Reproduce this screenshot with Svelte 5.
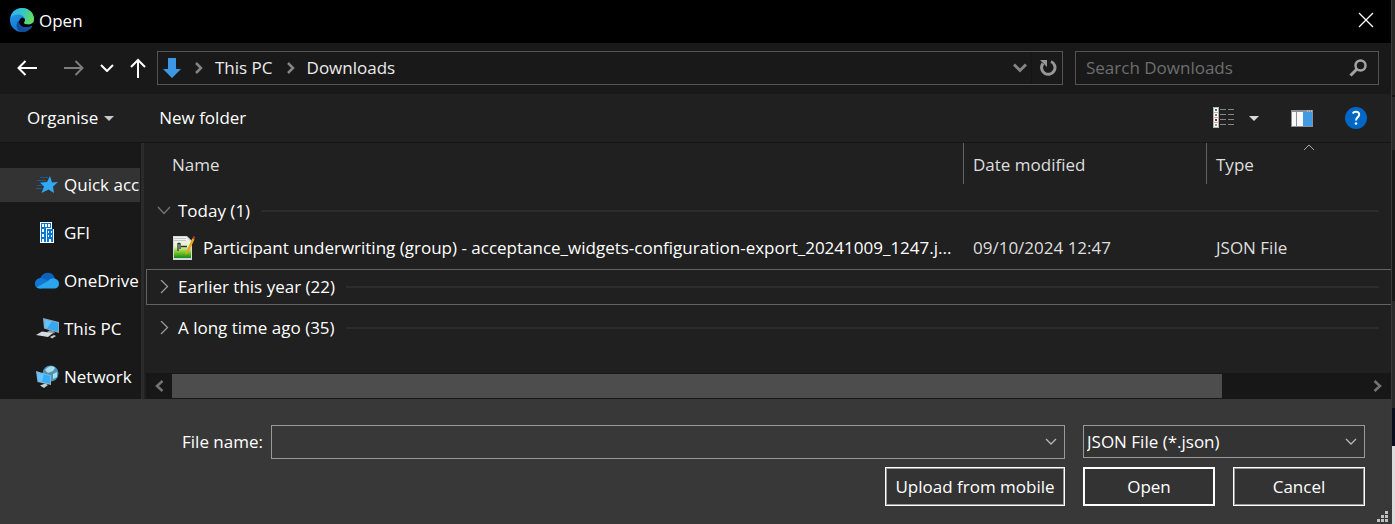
<script>
  const places = [
    { name: 'Quick access', icon: 'star', active: true },
    { name: 'GFI', icon: 'building' },
    { name: 'OneDrive', icon: 'cloud' },
    { name: 'This PC', icon: 'pc' },
    { name: 'Network', icon: 'network' }
  ];
  let search = $state('');
  let fileName = $state('');
</script>

<div class="screen">
  <div class="dialog" role="dialog" aria-labelledby="dialog-title">
    <header class="titlebar">
      <svg class="edge" width="24" height="24" viewBox="0 0 24 24" aria-hidden="true">
        <defs>
          <linearGradient id="edge-top" x1="0" y1="0.3" x2="1" y2="0.6">
            <stop offset="0" stop-color="#2fb4f0" />
            <stop offset="0.5" stop-color="#36c8c4" />
            <stop offset="1" stop-color="#6be04a" />
          </linearGradient>
          <linearGradient id="edge-left" x1="0" y1="0" x2="0.6" y2="1">
            <stop offset="0" stop-color="#2aa0ea" />
            <stop offset="1" stop-color="#0a70d2" />
          </linearGradient>
        </defs>
        <circle cx="12" cy="12" r="12" fill="url(#edge-left)" />
        <path d="M9 15C9 21 16 22 22 18.5C19.500 22.500 15.500 24.300 11.500 24C6.500 22.500 5 17 8.500 12.500Z" fill="#114a9a" />
        <path d="M0.500 9.500C2 3.500 6.500 0 12 0C19 0 24 5 24 10.800C24 14.500 21 16.500 18 16.500C15.500 16.500 13.800 15.600 13.800 14.800C13.800 14.200 15 13.800 15 12C15 8.500 11.500 6.500 8 6.500C4.500 6.500 1.800 8 0.500 9.500Z" fill="url(#edge-top)" />
        <path d="M9 15C8.700 12.500 10 10.500 12 9.500C14 9.800 15 11 15 12.300C15 13.800 13.800 14.200 13.800 14.800C13.800 15.600 15.500 16.500 18 16.500C20 16.500 21.800 15.900 24 14L24 19L22 18C16 21 10 19 9 15Z" fill="#000" />
        <path d="M9 15C9.500 18.700 14.500 20.800 22 17.800C22.500 18.200 21.800 19 21.200 19.600C16 25 8.500 21.500 9 15Z" fill="#12509f" />
      </svg>
      <h1 id="dialog-title">Open</h1>
      <button class="close" aria-label="Close">
        <svg width="16" height="16" viewBox="0 0 16 16"><path d="M1 1L15 15M15 1L1 15" stroke="#fff" stroke-width="1.300" /></svg>
      </button>
    </header>

    <nav class="navbar" aria-label="Location">
      <button class="back" aria-label="Back">
        <svg width="20" height="16" viewBox="0 0 20 16"><path d="M20 8H1.500M8.500 1L1.500 8L8.500 15" fill="none" stroke="#fff" stroke-width="2" /></svg>
      </button>
      <button class="forward" aria-label="Forward">
        <svg width="20" height="16" viewBox="0 0 20 16"><path d="M0 8H18.500M11.500 1L18.500 8L11.500 15" fill="none" stroke="#7d7d7d" stroke-width="2" /></svg>
      </button>
      <button class="recent" aria-label="Recent locations">
        <svg width="14" height="8" viewBox="0 0 14 8"><path d="M1 1L7 7L13 1" fill="none" stroke="#fff" stroke-width="2" /></svg>
      </button>
      <button class="up" aria-label="Up one level">
        <svg width="16" height="20" viewBox="0 0 16 20"><path d="M8 20V2M1 9L8 2L15 9" fill="none" stroke="#fff" stroke-width="2" /></svg>
      </button>
      <div class="address">
        <svg width="18" height="20" viewBox="0 0 18 20" aria-hidden="true"><path d="M5 0H13V11H18L9 20L0 11H5Z" fill="#3c97e6" /></svg>
        <svg class="sep" width="8" height="12" viewBox="0 0 8 12" aria-hidden="true"><path d="M1 1L6 6L1 11" fill="none" stroke="#858585" stroke-width="2.500" /></svg>
        <a href="#this-pc">This PC</a>
        <svg class="sep" width="8" height="12" viewBox="0 0 8 12" aria-hidden="true"><path d="M1 1L6 6L1 11" fill="none" stroke="#858585" stroke-width="2.500" /></svg>
        <a href="#downloads">Downloads</a>
        <button class="history" aria-label="Previous locations">
          <svg width="14" height="10" viewBox="0 0 14 10"><path d="M1 1.500L7 7.500L13 1.500" fill="none" stroke="#858585" stroke-width="3" /></svg>
        </button>
        <button class="refresh" aria-label="Refresh">
          <svg width="18" height="18" viewBox="0 0 18 18"><path d="M12 2.500A6.700 6.700 0 1 1 4 4.500" fill="none" stroke="#969696" stroke-width="3" /><path d="M1 1H8V8Z" fill="#969696" /></svg>
        </button>
      </div>
      <label class="search">
        <input type="text" placeholder="Search Downloads" aria-label="Search Downloads" bind:value={search} />
        <svg width="18" height="18" viewBox="0 0 18 18" aria-hidden="true"><circle cx="11.500" cy="6.500" r="5" fill="none" stroke="#a3a3a3" stroke-width="2.500" /><path d="M8 10L1.500 16.500" stroke="#a3a3a3" stroke-width="3" /></svg>
      </label>
    </nav>

    <div class="toolbar">
      <button class="organise">Organise
        <svg width="10" height="5" viewBox="0 0 10 5" aria-hidden="true"><path d="M0 0H10L5 5Z" fill="#c8c8c8" /></svg>
      </button>
      <button>New folder</button>
      <div class="tools">
        <button aria-label="Change view">
          <svg width="22" height="22" viewBox="0 0 22 22">
            <path d="M0 0H6V21H0Z" fill="#b4b4b4" />
            <path d="M1 1H5V5H1ZM1 6H5V10H1ZM1 11H5V15H1ZM1 16H5V20H1Z" fill="#fff" />
            <rect x="2" y="2" width="2" height="2" fill="#2d76a8" />
            <rect x="2" y="7" width="2" height="2" fill="#a8634c" />
            <rect x="2" y="12" width="2" height="2" fill="#c81818" />
            <rect x="2" y="17" width="2" height="2" fill="#7ea850" />
            <path d="M7 2.500H13M15 2.500H21M7 7.500H13M15 7.500H21M7 12.500H13M15 12.500H21M7 17.500H13M15 17.500H21" stroke="#858585" />
          </svg>
        </button>
        <button class="view-more" aria-label="More view options">
          <svg width="10" height="5" viewBox="0 0 10 5"><path d="M0 0H10L5 5Z" fill="#d8d8d8" /></svg>
        </button>
        <button class="preview" aria-label="Show the preview pane">
          <svg width="22" height="17" viewBox="0 0 22 17">
            <rect width="22" height="17" fill="#8c9096" />
            <path d="M1 2H5V16H1ZM6 2H12V16H6Z" fill="#f8f8f8" />
            <rect x="12" y="2" width="9" height="14" fill="#419be4" />
            <path d="M16 1H17M18 1H19M20 1H21" stroke="#ddd" />
          </svg>
        </button>
        <button class="help" aria-label="Help">
          <svg width="22" height="22" viewBox="0 0 22 22">
            <circle cx="11" cy="11" r="11" fill="#0067c5" />
            <path d="M7.800 6.500C9 3.800 14.200 4 14.200 7.500C14.200 10.200 11 10.500 11 13.500" fill="none" stroke="#fff" stroke-width="2" />
            <circle cx="11" cy="16.500" r="1.300" fill="#fff" />
          </svg>
        </button>
      </div>
    </div>

    <div class="body">
      <ul class="places">
        {#each places as place}
          <li>
            <a href="#{place.icon}" class:active={place.active}>
              <svg width="24" height="24" viewBox="0 0 24 24" aria-hidden="true">
                {#if place.icon === 'star'}
                  <path d="M15 3L17 9.500L23 9L18 13.500L19 20L13.500 16.500L6.500 20L9 13.500L5 9.500L12 9Z" fill="#30a8f4" />
                  <path d="M5 4.500H13M2 7.500H11M2 12.500H8M1 15.500H7" stroke="#1c5a8c" />
                {:else if place.icon === 'building'}
                  <path d="M5 1H17V8H19V22H5Z" fill="#fff" />
                  <path d="M6 2H16V7H11V21H6ZM12 8H18V21H12Z" fill="#0078d7" />
                  <path d="M7 3H9V6H7ZM10 3H12V6H10ZM13 3H15V6H13ZM7 8H9V11H7ZM7 13H9V16H7ZM13 10H14V12H13ZM16 10H17V12H16ZM13 14H14V16H13ZM16 14H17V16H16ZM14 18H16V22H14ZM7 18H9V22H7Z" fill="#fff" />
                {:else if place.icon === 'cloud'}
                  <path d="M5 9.500C7 4 13 2.500 17 5C18.500 6 19.500 7.500 19.700 9.500L14 14Z" fill="#0b63bb" />
                  <path d="M5 19.500C1.500 19.500 0 17.500 0 14.500C0 11 3 8.800 6.500 9C10 9 13 12 16 14L6 19.500Z" fill="#1177d2" />
                  <path d="M13 12C15 9.500 18 8.500 20.500 9.700C23 10.700 24 12.500 24 15C24 17.800 22 19.500 19.500 19.500H5C3.500 19.500 2.500 19 1.800 18.300Z" fill="#2aa6ed" />
                {:else if place.icon === 'pc'}
                  <path d="M8 1L24 5V16L9 11.500Z" fill="#8fa9bb" />
                  <path d="M9.500 2.500L23 6V14.500L10.300 11Z" fill="#35a7f5" />
                  <path d="M9.500 2.500L17 4.500L12 11.500L10.300 11Z" fill="#65c1fc" />
                  <path d="M15 13L19 14.500L20 16L15 17L12 15Z" fill="#8799a5" />
                  <path d="M1 18L7 14.500L18 16L13 20Z" fill="#d3dbe1" />
                  <path d="M15 20L19 18L21 19L17 21.500Z" fill="#c2cbd2" />
                {:else}
                  <circle cx="15.500" cy="8.500" r="8" fill="#4a94b8" />
                  <path d="M10 5C13 1 18 0 20 3L18 6L13 8ZM18 9L22 7L22 12L18 14Z" fill="#a9dcec" />
                  <path d="M1 6L16 10.500V20L2.500 17Z" fill="#91b4c8" />
                  <path d="M2 7.500L15 11.300V18.500L3.300 16Z" fill="#32adf8" />
                  <path d="M2 7.500L9 9.500L7 16.800L3.300 16Z" fill="#65c3ff" />
                  <path d="M5 20.500L10 18.500L13 20L9 23Z" fill="#c6d0d7" />
                {/if}
              </svg>
              <span>{place.name}</span>
            </a>
          </li>
        {/each}
      </ul>

      <div class="listing">
        <table>
          <colgroup><col /><col class="c-date" /><col class="c-type" /></colgroup>
          <thead>
            <tr>
              <th scope="col" class="name">Name</th>
              <th scope="col">Date modified</th>
              <th scope="col" aria-sort="ascending">Type
                <svg class="sort" width="12" height="7" viewBox="0 0 12 7" aria-hidden="true"><path d="M1 6L6 1L11 6" fill="none" stroke="#a8a8a8" /></svg>
              </th>
            </tr>
          </thead>
          <tbody>
            <tr class="group first">
              <td colspan="3">
                <button aria-expanded="true">
                  <svg width="14" height="14" viewBox="0 0 14 14" aria-hidden="true"><path d="M1 3L7 9.500L13 3" fill="none" stroke="#757575" stroke-width="1.300" /></svg>
                  <span>Today (1)</span>
                </button>
              </td>
            </tr>
            <tr class="file">
              <td>
                <div class="file-name">
                  <svg width="22" height="24" viewBox="0 0 22 24" aria-hidden="true">
                    <defs>
                      <linearGradient id="sheet" x1="0" y1="0" x2="0" y2="1">
                        <stop offset="0" stop-color="#f4f4f4" />
                        <stop offset="0.450" stop-color="#e6f3c4" />
                        <stop offset="0.700" stop-color="#87ce30" />
                        <stop offset="1" stop-color="#108a18" />
                      </linearGradient>
                    </defs>
                    <path d="M0 0H14L19 5V24H0Z" fill="#d5d8dc" />
                    <path d="M1 1H13L18 6V22H1Z" fill="url(#sheet)" />
                    <path d="M1 2.500H13M1 4.500H13" stroke="#bfc7d2" />
                    <path d="M5 7V15M7 7V13M5 7.500H7M8 10.500H14" fill="none" stroke="#333" stroke-width="1.300" />
                    <path d="M19.500 2L21.500 3.500L15 17L12.500 19L13 16Z" fill="#e9a51b" />
                    <path d="M19.500 2L20.500 0L22 1L21.500 3.500Z" fill="#b23b3b" />
                  </svg>
                  <span>Participant underwriting (group) - acceptance_widgets-configuration-export_20241009_1247.j...</span>
                </div>
              </td>
              <td>09/10/2024 12:47</td>
              <td>JSON File</td>
            </tr>
            <tr class="group focused">
              <td colspan="3">
                <button aria-expanded="false">
                  <svg width="14" height="14" viewBox="0 0 14 14" aria-hidden="true"><path d="M4 0L10.500 6.500L4 13" fill="none" stroke="#9a9a9a" stroke-width="1.300" /></svg>
                  <span>Earlier this year (22)</span>
                </button>
              </td>
            </tr>
            <tr class="group">
              <td colspan="3">
                <button aria-expanded="false">
                  <svg width="14" height="14" viewBox="0 0 14 14" aria-hidden="true"><path d="M4 0L10.500 6.500L4 13" fill="none" stroke="#9a9a9a" stroke-width="1.300" /></svg>
                  <span>A long time ago (35)</span>
                </button>
              </td>
            </tr>
          </tbody>
        </table>
        <div class="scrollbar">
          <button aria-label="Scroll left">
            <svg width="10" height="12" viewBox="0 0 10 12"><path d="M8.500 1L3 6L8.500 11" fill="none" stroke="#747474" stroke-width="2.500" /></svg>
          </button>
          <div class="track"><div class="thumb"></div></div>
          <button aria-label="Scroll right">
            <svg width="10" height="12" viewBox="0 0 10 12"><path d="M1.500 1L7 6L1.500 11" fill="none" stroke="#747474" stroke-width="2.500" /></svg>
          </button>
        </div>
      </div>
    </div>

    <footer>
      <div class="fields">
        <label for="file-name">File name:</label>
        <div class="field combo">
          <input id="file-name" type="text" bind:value={fileName} />
          <button aria-label="Previous file names">
            <svg width="12" height="8" viewBox="0 0 12 8"><path d="M1 1L6 6L11 1" fill="none" stroke="#b8b8b8" stroke-width="1.300" /></svg>
          </button>
        </div>
        <div class="field type">
          <select aria-label="File type"><option>JSON File (*.json)</option></select>
          <svg width="12" height="8" viewBox="0 0 12 8" aria-hidden="true"><path d="M1 1L6 6L11 1" fill="none" stroke="#b8b8b8" stroke-width="1.300" /></svg>
        </div>
      </div>
      <div class="actions">
        <button class="upload">Upload from mobile</button>
        <button class="default">Open</button>
        <button>Cancel</button>
      </div>
      <svg class="grip" width="11" height="11" viewBox="0 0 11 11" aria-hidden="true"><path d="M8 0H11V3H8ZM4 4H7V7H4ZM8 4H11V7H8ZM0 8H3V11H0ZM4 8H7V11H4ZM8 8H11V11H8Z" fill="#bfbfbf" /></svg>
    </footer>
  </div>
  <div class="behind"></div>
</div>

<style>
  :global(body) { margin: 0; background: #202020; }
  .screen { display: flex; min-height: 100vh; font: 17px/24px "Open Sans", "Noto Sans", sans-serif; color: #fff; }
  .screen * { box-sizing: border-box; }
  .dialog { flex: 1; min-width: 0; display: flex; flex-direction: column; background: #202020; }
  .behind { width: 4px; border-left: 1px solid #3a3a3a; background: linear-gradient(#292826 95px, #151515 95px 97px, #2b2b2b 97px 150px, #181818 150px 301px, #2b2b2b 301px 408px, #0b0e1c 408px 446px, #dcdcdc 446px); }
  button, input, select { font: inherit; color: inherit; background: none; border: 0; padding: 0; margin: 0; border-radius: 0; }
  a { color: inherit; text-decoration: none; }
  svg { display: block; flex: none; }

  .titlebar { display: flex; align-items: center; height: 43px; padding: 0 17px 3px 10px; background: #000; }
  .titlebar h1 { margin: 0 auto 0 5px; font-size: 17px; font-weight: 400; padding-top: 2px; }

  .navbar { display: flex; align-items: center; height: 51px; padding: 0 12px 2px 0; background: #191919; }
  .navbar > button { display: flex; justify-content: center; }
  .back { width: 54px; }
  .forward { width: 40px; }
  .recent { width: 26px; }
  .up { width: 36px; margin-right: 1px; }
  .address { flex: 1; display: flex; align-items: center; height: 34px; padding-left: 5px; border: 1px solid #535353; }
  .address a { color: #ececec; }
  .sep { margin: 0 12px 0 14px; }
  .history { margin-left: auto; padding-right: 4px; }
  .refresh { height: 32px; padding: 0 5px 0 7px; border-left: 1px solid #151515; }
  .search { display: flex; align-items: center; width: 304px; height: 34px; margin-left: 12px; padding: 0 11px 0 10px; border: 1px solid #535353; }
  .search input { flex: 1; min-width: 0; outline: 0; }
  .search input::placeholder { color: #6e6e6e; opacity: 1; }

  .toolbar { display: flex; align-items: center; height: 49px; padding: 0 24px 0 27px; border-bottom: 1px solid #151515; }
  .organise { display: flex; align-items: center; gap: 6px; margin-right: 45px; }
  .tools { display: flex; align-items: center; margin-left: auto; }
  .view-more { margin-left: 14px; }
  .preview { margin-left: 32px; }
  .help { margin-left: 32px; }

  .body { display: flex; flex: 1; min-height: 256px; }
  .places { width: 144px; margin: 0; padding: 25px 0 0; list-style: none; background: #191919; border-right: 3px solid #2b2b2b; overflow: hidden; }
  .places li { margin-bottom: 14px; padding-right: 1px; }
  .places li:last-child { margin-bottom: 0; }
  .places a { display: flex; align-items: center; gap: 5px; height: 34px; padding-left: 35px; white-space: nowrap; overflow: hidden; }
  .places .active { background: #333; }
  .listing { flex: 1; min-width: 0; display: flex; flex-direction: column; padding-left: 2px; }
  table { width: 100%; table-layout: fixed; border-collapse: separate; border-spacing: 0; }
  .c-date { width: 243px; }
  .c-type { width: 185px; }
  th { height: 41px; padding: 2px 0 0 9px; text-align: left; font-weight: 400; color: #dedede; border-left: 1px solid #636363; position: relative; }
  th.name { padding-left: 26px; border-left: 0; }
  .sort { position: absolute; top: 1px; left: 50%; margin-left: 4px; }
  td { padding: 0 0 0 10px; color: #dedede; white-space: nowrap; }
  .file td { height: 39px; padding-bottom: 3px; }
  .file td:first-child { padding-left: 27px; color: #fff; }
  .file-name { display: flex; align-items: center; gap: 8px; }
  .group td { height: 46px; padding: 0 12px 0 11px; color: #fff; }
  .group.first td { padding-top: 8px; }
  .group.focused td { height: 36px; padding-left: 10px; border: 1px solid #636363; border-right: 0; }
  .group button { display: flex; align-items: center; gap: 7px; width: 100%; }
  .group button::after { content: ""; flex: 1; height: 2px; margin-left: 4px; background: #2c2c2c; }
  .scrollbar { display: flex; height: 26px; margin-top: auto; background: #171717; }
  .scrollbar button { display: flex; align-items: center; justify-content: center; width: 26px; }
  .track { flex: 1; padding: 1px 0; }
  .thumb { width: 88%; height: 24px; background: #4d4d4d; }

  footer { position: relative; padding: 26px 26px 18px 0; background: #383838; }
  .fields { display: grid; grid-template-columns: 263px 1fr 282px; align-items: start; }
  .fields label { padding: 5px 0; text-align: right; }
  .field { display: flex; align-items: center; border: 1px solid #999; }
  .combo { height: 34px; margin: 0 18px 0 8px; padding-right: 7px; }
  .combo input { flex: 1; min-width: 0; height: 32px; padding: 0 4px; outline: 0; }
  .type { height: 33px; padding-right: 7px; background: #333; }
  .type select { flex: 1; min-width: 0; height: 31px; padding-left: 3px; appearance: none; outline: 0; }
  .actions { display: flex; justify-content: flex-end; gap: 18px; margin-top: 8px; }
  .actions button { width: 132px; height: 39px; background: #333; border: 1px solid #fff; box-shadow: inset 0 0 0 1px #999; }
  .actions .upload { width: 180px; }
  .actions .default { box-shadow: inset 0 0 0 1px #fff; }
  .grip { position: absolute; right: 3px; bottom: 2px; }
</style>
